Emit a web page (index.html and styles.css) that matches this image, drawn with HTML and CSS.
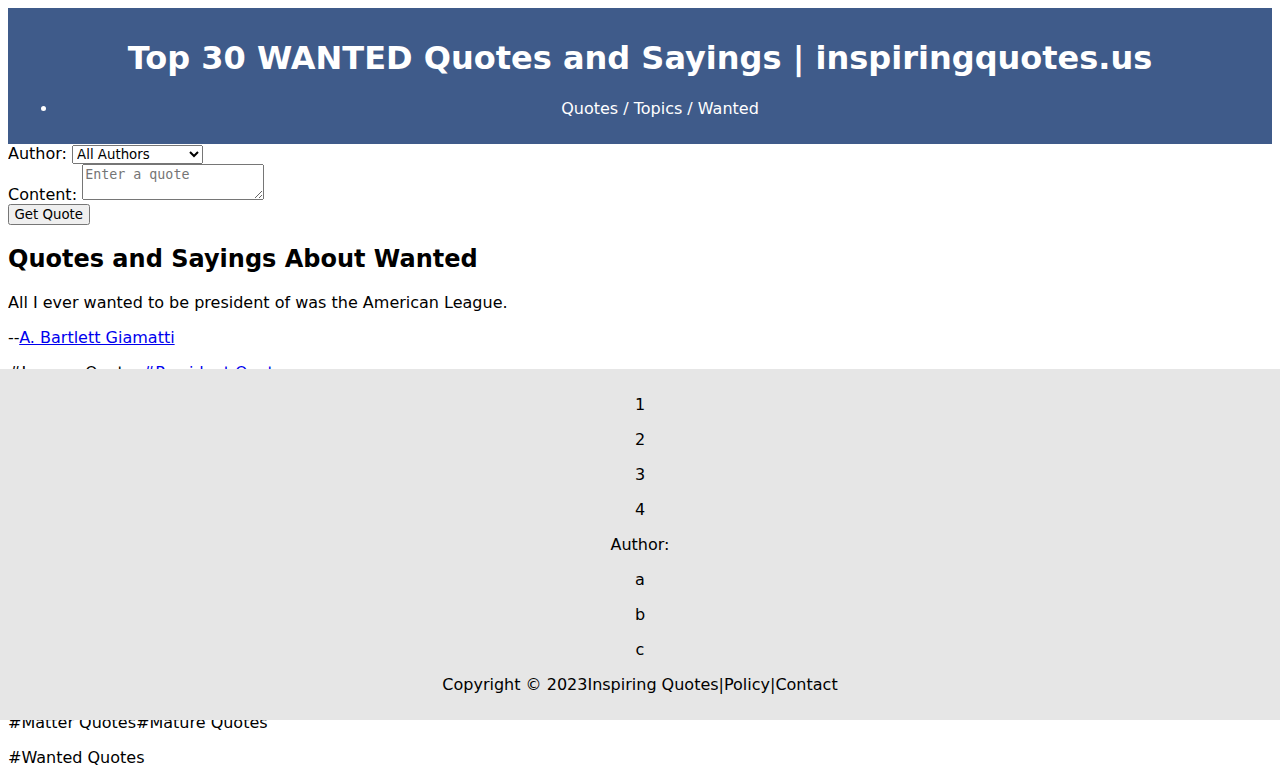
FILE: index.html
```html
<!DOCTYPE html>
<html lang="en">
<head>
<meta charset="utf-8">
<title>Top 30 WANTED Quotes and Sayings | inspiringquotes.us</title>
<link rel="stylesheet" href="styles.css">
</head>
<body>
<header class="site-header">
  <h1 class="site-title">Top 30 WANTED Quotes and Sayings | inspiringquotes.us</h1>
  <ul class="crumbs">
    <li>Quotes / Topics / Wanted</li>
  </ul>
</header>
<form class="search">
  <label>Author:</label> <select class="sel"><option>All Authors</option><option>A. Bartlett Giamatti</option></select><br>
  <label>Content:</label> <textarea class="area" placeholder="Enter a quote"></textarea><br>
  <button type="button" class="btn">Get Quote</button>
</form>
<main>
  <h2 class="section-title">Quotes and Sayings About Wanted</h2>
  <p>All I ever wanted to be president of was the American League.</p>
  <p>--<a href="#">A. Bartlett Giamatti</a></p>
  <p>#League Quotes<a href="#">#President Quotes</a></p>
  <p>I never wanted to be famous. I only wanted to be great.</p>
  <p>--<a href="#">Ray Charles</a></p>
  <p>#Famous Quotes#Great Quotes</p>
  <p>All I ever wanted was to be loved.</p>
  <p>--<a href="#">Anonymous</a></p>
  <p>#Love Quotes#Loved Quotes</p>
  <p>What matters is being mature enough to get what you wanted.</p>
  <p>--<a href="#">Anonymous</a></p>
  <p>#Being Quotes#Enough Quotes</p>
  <p>#Matter Quotes#Mature Quotes</p>
  <p>#Wanted Quotes</p>
</main>
<footer class="site-footer">
  <p>1</p>
  <p>2</p>
  <p>3</p>
  <p>4</p>
  <p>Author:</p>
  <p>a</p>
  <p>b</p>
  <p>c</p>
  <p>Copyright © 2023Inspiring Quotes|Policy|Contact</p>
</footer>
</body>
</html>
```
FILE: styles.css
```css
body {
  margin: 8px;
  font-family: "DejaVu Sans", sans-serif;
  font-size: 16px;
  color: #000;
  background: #fff;
}
.site-header {
  background: #3f5b8a;
  color: #fff;
  padding: 10px;
  text-align: center;
}
.site-title {
  font-size: 32px;
  margin: 21.44px 0;
}
.crumbs {
  margin: 16px 0;
  padding-left: 40px;
}
.search {
  margin: 0;
}
.sel, .btn {
  font-family: "DejaVu Sans", sans-serif;
  font-size: 13.333px;
}
.sel {
  width: 131px;
}
.btn {
  padding: 1px 4.5px;
}
.area {
  font-family: "DejaVu Sans Mono", monospace;
  font-size: 13.333px;
}
.section-title {
  font-size: 24px;
  margin: 19.92px 0;
}
a {
  color: #0000ee;
}
.site-footer {
  position: absolute;
  top: 369px;
  left: 0;
  right: 0;
  height: 331px;
  padding: 10px 0;
  background: #e6e6e6;
  text-align: center;
}
```
